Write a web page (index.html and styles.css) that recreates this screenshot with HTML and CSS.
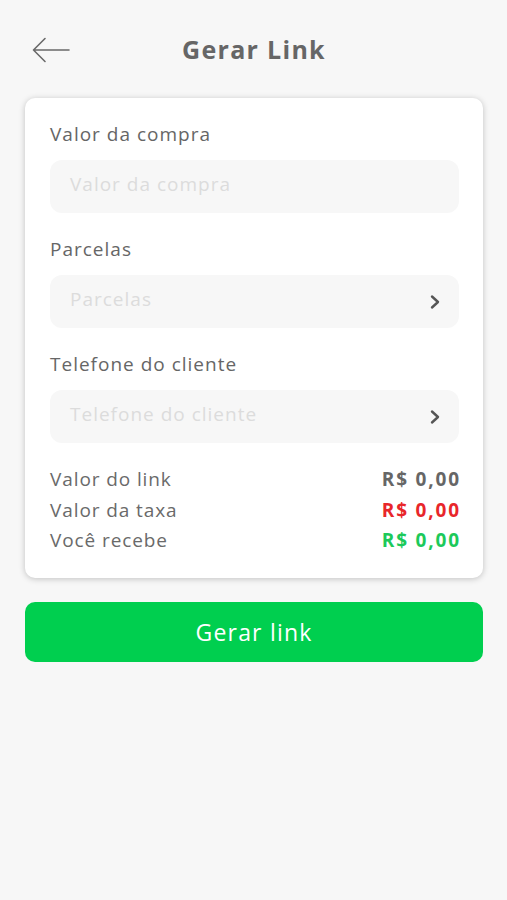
FILE: index.html
```html
<!DOCTYPE html>
<html lang="pt-BR">
<head>
<meta charset="utf-8">
<title>Gerar Link</title>
<link rel="stylesheet" href="styles.css">
</head>
<body>
<div class="page">
  <header class="header">
    <button class="back" aria-label="Voltar">
      <svg width="38" height="26" viewBox="0 0 38 26"><path d="M37 13H1.5M13 1.5L1.5 13L13 24.5" fill="none" stroke="#6a6a6a" stroke-width="1.6" stroke-linecap="round" stroke-linejoin="round"/></svg>
    </button>
    <h1 class="title">Gerar Link</h1>
  </header>

  <section class="card">
    <div class="field">
      <label class="label">Valor da compra</label>
      <div class="input"><span class="placeholder">Valor da compra</span></div>
    </div>
    <div class="field">
      <label class="label">Parcelas</label>
      <div class="input"><span class="placeholder">Parcelas</span>
        <svg class="chev" width="12" height="16" viewBox="0 0 12 16"><path d="M3 2.5L9 8L3 13.5" fill="none" stroke="#555" stroke-width="2.4" stroke-linecap="round" stroke-linejoin="round"/></svg>
      </div>
    </div>
    <div class="field">
      <label class="label">Telefone do cliente</label>
      <div class="input"><span class="placeholder">Telefone do cliente</span>
        <svg class="chev" width="12" height="16" viewBox="0 0 12 16"><path d="M3 2.5L9 8L3 13.5" fill="none" stroke="#555" stroke-width="2.4" stroke-linecap="round" stroke-linejoin="round"/></svg>
      </div>
    </div>
    <div class="summary">
      <div class="row"><span>Valor do link</span><span class="val">R$ 0,00</span></div>
      <div class="row"><span>Valor da taxa</span><span class="val red">R$ 0,00</span></div>
      <div class="row"><span>Você recebe</span><span class="val green">R$ 0,00</span></div>
    </div>
  </section>

  <button class="cta">Gerar link</button>
</div>
</body>
</html>
```

FILE: styles.css
```css
* { box-sizing: border-box; }
html, body { margin: 0; padding: 0; }
body {
  background: #f7f7f7;
  font-family: "Open Sans", "Noto Sans", sans-serif;
  color: #666;
}
.page {
  padding: 0 24px 0 25px;
  display: flex;
  flex-direction: column;
}
.header {
  position: relative;
  height: 52px;
  margin-top: 23px;
  margin-bottom: 23px;
  display: flex;
  align-items: center;
  justify-content: center;
}
.back {
  position: absolute;
  left: 7px;
  top: 14px;
  border: 0;
  background: none;
  padding: 0;
  width: 38px;
  height: 26px;
  display: block;
}
.back svg { display: block; }
.title {
  margin: 0;
  font-size: 25px;
  font-weight: 700;
  color: #666;
  letter-spacing: 1.3px;
}
.card {
  background: #fff;
  border-radius: 10px;
  box-shadow: 0 1px 6px rgba(0,0,0,0.22);
  padding: 24px 24px 22px 25px;
  display: flex;
  flex-direction: column;
}
.field {
  display: flex;
  flex-direction: column;
  gap: 13px;
  margin-bottom: 24px;
}
.label {
  font-size: 19px;
  line-height: 25px;
  letter-spacing: 1px;
  color: #666;
}
.input {
  height: 53px;
  background: #f7f7f7;
  border-radius: 12px;
  display: flex;
  align-items: center;
  justify-content: space-between;
  padding: 0 18px 0 20px;
}
.placeholder {
  font-size: 19px;
  line-height: 25px;
  margin-top: -4px;
  letter-spacing: 1px;
  color: #dcdcdc;
}
.chev { display: block; }
.summary {
  margin-top: -3px;
  display: flex;
  flex-direction: column;
}
.row {
  display: flex;
  justify-content: space-between;
  font-size: 19px;
  line-height: 30.5px;
  letter-spacing: 0.9px;
  color: #6a6a6a;
}
.val { font-weight: 700; color: #666; letter-spacing: 1.8px; margin-right: -1.8px; }
.red { color: #e8262a; }
.green { color: #1cc95a; }
.cta {
  margin-top: 24px;
  height: 60px;
  border: 0;
  border-radius: 10px;
  background: #00cf4f;
  color: #fff;
  font-family: inherit;
  font-size: 23px;
  letter-spacing: 1.2px;
}
```
